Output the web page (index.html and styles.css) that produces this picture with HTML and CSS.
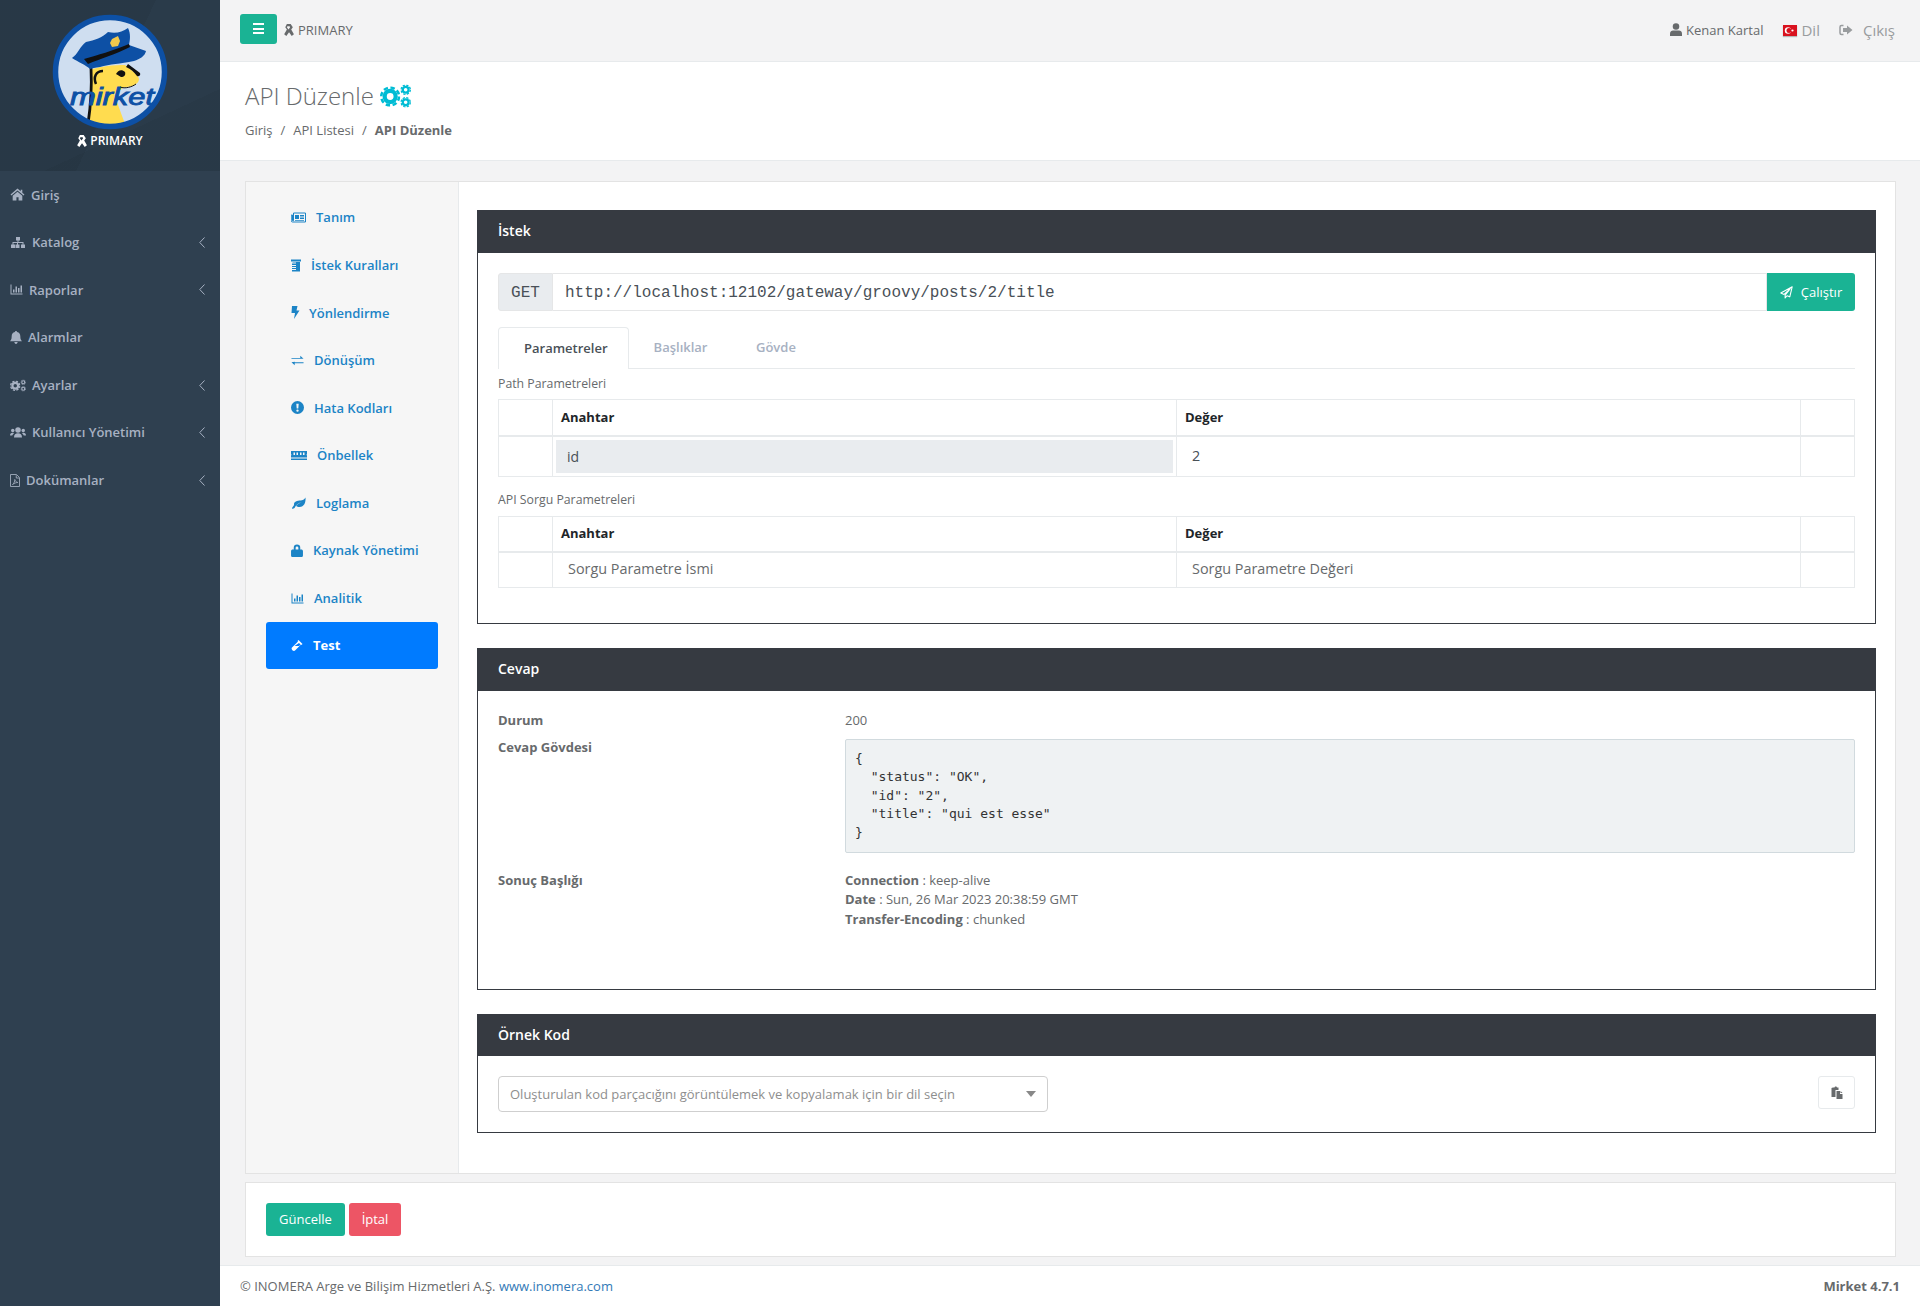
FILE: index.html
```html
<!DOCTYPE html>
<html lang="tr">
<head>
<meta charset="utf-8">
<title>API Düzenle</title>
<link rel="stylesheet" href="styles.css">
</head>
<body>
<svg class="defs" width="0" height="0" aria-hidden="true">
  <symbol id="i-ribbon" viewBox="0 0 24 24"><path d="M9 1h7l4 6-3 4 5 9-4 3-5-7-5 7-4-3 5-9-3-4zM10 5l-1 2 3 4 3-4-1-2z" fill-rule="evenodd" fill="currentColor"/></symbol>
  <symbol id="i-home" viewBox="0 0 28 24"><path d="M14 1 1 12l1.600 2L14 4.500 25.400 14 27 12l-4-3.400V3h-3v3zM5 14.500V23h7v-6h4v6h7v-8.500L14 7z" fill="currentColor"/></symbol>
  <symbol id="i-sitemap" viewBox="0 0 32 24"><path d="M12 1h8v7h-3v3h10v5h3v7h-8v-7h3v-3h-9v3h3v7h-8v-7h3v-3H7v3h3v7H2v-7h3v-5h10V8h-3z" fill="currentColor"/></symbol>
  <symbol id="i-chart" viewBox="0 0 26 22"><path d="M1 1h2v18h22v2H1zM6 11h3v6H6zM11 5h3v12h-3zM16 8h3v9h-3zM21 3h3v14h-3z" fill="currentColor"/></symbol>
  <symbol id="i-bell" viewBox="0 0 22 24"><path d="M11 0c1 0 2 1 2 2 4 .8 6 4 6 8 0 5 1 6 3 9H0c2-3 3-4 3-9 0-4 2-7.200 6-8 0-1 1-2 2-2zM8 20.500h6c0 2-1.300 3.500-3 3.500s-3-1.500-3-3.500z" fill="currentColor"/></symbol>
  <symbol id="i-gear" viewBox="0 0 24 24"><circle cx="12" cy="12" r="6.500" fill="none" stroke="currentColor" stroke-width="5"/><circle cx="12" cy="12" r="10.500" fill="none" stroke="currentColor" stroke-width="3" stroke-dasharray="5.200 3.050"/></symbol>
  <symbol id="i-cogs" viewBox="0 0 32 24"><use href="#i-gear" x="0" y="2" width="21" height="21"/><use href="#i-gear" x="21" y="0" width="11" height="11"/><use href="#i-gear" x="21" y="13" width="11" height="11"/></symbol>
  <symbol id="i-users" viewBox="0 0 32 24"><circle cx="16" cy="7" r="5.500" fill="currentColor"/><circle cx="5.500" cy="8" r="3.500" fill="currentColor"/><circle cx="26.500" cy="8" r="3.500" fill="currentColor"/><path d="M8 22c0-6 3-8.500 8-8.500s8 2.500 8 8.500zM0 18c0-4 2-5.500 5-5.500 1 0 2 .3 3 1-2 1.500-3 3-3.500 4.500zM32 18c0-4-2-5.500-5-5.500-1 0-2 .3-3 1 2 1.500 3 3 3.500 4.500z" fill="currentColor"/></symbol>
  <symbol id="i-pdf" viewBox="0 0 20 26"><path d="M2 1h11l6 6v18H1V1zM12.500 2.500V8H18M5 21c3-2 5-7 4.500-10 1 3 2.500 5 6 6-3 0-6 1-10.500 4z" fill="none" stroke="currentColor" stroke-width="1.700"/></symbol>
  <symbol id="i-news" viewBox="0 0 30 20"><path d="M5 1h24v18H3c-1.500 0-2.500-1-2.500-2.500V5H3v11.500c0 .5 2 .5 2 0z" fill="none" stroke="currentColor" stroke-width="2"/><path d="M8 5h8v8H8zM18 5h8v3h-8zM18 10h8v3h-8zM8 15h18v1.500H8z" fill="currentColor"/></symbol>
  <symbol id="i-scroll" viewBox="0 0 20 26"><path d="M0 1h20v4H0zM3 6h15v19H2v-3h8v-2H2v-2h8v-2H2v-2h8v-2H2V9h8V7H3z" fill="currentColor"/></symbol>
  <symbol id="i-bolt" viewBox="0 0 18 26"><path d="M2 0h11l-2 9h6L6 26l2-12H1z" fill="currentColor"/></symbol>
  <symbol id="i-exchange" viewBox="0 0 28 20"><path d="M1 4.500h19V0l7 6H1zM27 14H8v-1.500L1 14l7 6v-4h19z" fill="currentColor"/></symbol>
  <symbol id="i-alert" viewBox="0 0 24 24"><path d="M12 0a12 12 0 1 1 0 24 12 12 0 0 1 0-24zM9.800 5l.7 9h3l.7-9zM12 15.500a2.200 2.200 0 1 0 0 4.400 2.200 2.200 0 0 0 0-4.400z" fill-rule="evenodd" fill="currentColor"/></symbol>
  <symbol id="i-memory" viewBox="0 0 32 20"><path d="M0 1h32v6c-1 .6-1 2.400 0 3v4H0v-4c1-.6 1-2.400 0-3zM5 4v5h3V4zM11 4v5h3V4zM18 4v5h3V4zM24 4v5h3V4zM0 16h32v3H0z" fill-rule="evenodd" fill="currentColor"/></symbol>
  <symbol id="i-leaf" viewBox="0 0 30 24"><path d="M29 0c1 10-3 19-12 19-3 0-5-1-7-2 3-4 7-6 12-8-6 1-12 5-15 12l-4 2-1-2c2-3 3-4 4-6C5 8 13 6 19 6c4 0 8-2 10-6z" fill="currentColor"/></symbol>
  <symbol id="i-lock" viewBox="0 0 22 24"><path d="M5 10V7a6 6 0 0 1 12 0v3h2c1.500 0 3 1 3 3v8c0 2-1.500 3-3 3H3c-1.500 0-3-1-3-3v-8c0-2 1.500-3 3-3zm3.500 0h5V7a2.500 2.500 0 0 0-5 0z" fill="currentColor"/></symbol>
  <symbol id="i-vial" viewBox="0 0 24 24"><path d="M15 1l8 8-2 2-1-1L8 22c-3 3-9-3-6-6L14 4l-1-1zM7 13h9l3-3-3-3z" fill="currentColor" fill-rule="evenodd"/></symbol>
  <symbol id="i-user" viewBox="0 0 24 26"><circle cx="12" cy="7" r="6.500" fill="currentColor"/><path d="M0 26v-5c0-4 3-6 6-6h12c3 0 6 2 6 6v5z" fill="currentColor"/></symbol>
  <symbol id="i-signout" viewBox="0 0 28 24"><path d="M9 3H5C3.500 3 2 4.500 2 6v12c0 1.500 1.500 3 3 3h4" fill="none" stroke="currentColor" stroke-width="3"/><path d="M16 3l11 9-11 9v-5H8V8h8z" fill="currentColor"/></symbol>
  <symbol id="i-plane" viewBox="0 0 24 24"><path d="M22.500 1.500 1.500 13l6 2.500L19 5 9.500 17v5l3.500-4 5 2z" fill="none" stroke="currentColor" stroke-width="2" stroke-linejoin="round"/></symbol>
  <symbol id="i-paste" viewBox="0 0 24 26"><path d="M4 3h3c0-3 5-3 5 0h3v5H9v14H1V4zM11 10h7v6h5v10H11zM19 10l4 4h-4z" fill="currentColor"/></symbol>
  <symbol id="i-chev" viewBox="0 0 6 11"><path d="M5.500.5 .8 5.500l4.700 5" fill="none" stroke="currentColor" stroke-width="1"/></symbol>
</svg>

<aside class="sidebar">
  <div class="brand">
    <svg class="logo" viewBox="0 0 120 120">
      <defs><clipPath id="logo-clip"><circle cx="60" cy="60" r="54"/></clipPath></defs>
      <circle cx="60" cy="60" r="54.500" fill="#cfdef0"/>
      <g clip-path="url(#logo-clip)">
        <path d="M40 58c1 20 0 35-2 54h37L64 82c6-2 6-6 12-7 8 0 13-4 13-8 0-3-8-10-14-14-10 0-25 1-35 5z" fill="#ffdc4f"/>
        <path d="M41 56c1 20 0 36-3 56" fill="none" stroke="#111" stroke-width="2.800"/>
        <path d="M46 72c-3-7 0-13 7-13" fill="none" stroke="#111" stroke-width="2.500"/>
        <path d="M66 62c2-4 6-5 9-2 1 3-1 5-4 5z" fill="#111"/>
        <path d="M78 52l12 9c1 2-1 4-3 3-3-4-6-7-11-9z" fill="#111"/>
        <path d="M70 75c5 2 12 0 16-3" fill="none" stroke="#111" stroke-width="1"/>
      </g>
      <path d="M22 46c6-4 8-12 14-16 9-2 16-4 22-10 8 2 14 0 20-4 3 6 2 12 1 17l17 6c-1 5-6 8-12 10-14 3-24 3-34 6-5 1-8 1-10 2-4-4-12-7-18-11z" fill="#0d50a5"/>
      <path d="M34 47c14-4 28-8 45-15l1 3c-14 7-30 12-42 17z" fill="#111"/>
      <path d="M62 27l6-3 2 5-2 5-6 1-2-4z" fill="#f2c94c"/>
      <text class="logo-word" x="20" y="93" textLength="84" lengthAdjust="spacingAndGlyphs">mirket</text>
      <circle cx="60" cy="60" r="54.500" fill="none" stroke="#0d50a5" stroke-width="5.500"/>
    </svg>
    <div class="brand-name"><svg class="ic ic-ribbon"><use href="#i-ribbon"/></svg>PRIMARY</div>
  </div>
  <nav class="side-nav">
    <a class="side-item"><svg class="ic side-ic w15"><use href="#i-home"/></svg><span>Giriş</span></a>
    <a class="side-item"><svg class="ic side-ic w16"><use href="#i-sitemap"/></svg><span>Katalog</span><svg class="ic chev"><use href="#i-chev"/></svg></a>
    <a class="side-item"><svg class="ic side-ic w13"><use href="#i-chart"/></svg><span>Raporlar</span><svg class="ic chev"><use href="#i-chev"/></svg></a>
    <a class="side-item"><svg class="ic side-ic w12"><use href="#i-bell"/></svg><span>Alarmlar</span></a>
    <a class="side-item"><svg class="ic side-ic w16"><use href="#i-cogs"/></svg><span>Ayarlar</span><svg class="ic chev"><use href="#i-chev"/></svg></a>
    <a class="side-item"><svg class="ic side-ic w16"><use href="#i-users"/></svg><span>Kullanıcı Yönetimi</span><svg class="ic chev"><use href="#i-chev"/></svg></a>
    <a class="side-item"><svg class="ic side-ic w10"><use href="#i-pdf"/></svg><span>Dokümanlar</span><svg class="ic chev"><use href="#i-chev"/></svg></a>
  </nav>
</aside>

<div class="main">
  <header class="topbar">
    <button class="menu-btn"><span></span><span></span><span></span></button>
    <svg class="ic top-ribbon"><use href="#i-ribbon"/></svg>
    <span class="top-title">PRIMARY</span>
    <div class="top-right">
      <span class="top-user"><svg class="ic top-user-ic"><use href="#i-user"/></svg>Kenan Kartal</span>
      <span class="top-link top-lang">
        <svg class="flag" viewBox="0 0 14 11"><rect width="14" height="11" fill="#d9111e"/><circle cx="5" cy="5.500" r="3.200" fill="#fff"/><circle cx="6" cy="5.500" r="2.500" fill="#d9111e"/><circle cx="9.500" cy="5.500" r="1.100" fill="#fff"/></svg>Dil</span>
      <span class="top-link top-exit"><svg class="ic top-exit-ic"><use href="#i-signout"/></svg>Çıkış</span>
    </div>
  </header>

  <section class="heading">
    <h1>API Düzenle <svg class="ic title-ic"><use href="#i-cogs"/></svg></h1>
    <ol class="crumbs">
      <li>Giriş</li><li class="sep">/</li><li>API Listesi</li><li class="sep">/</li><li class="cur">API Düzenle</li>
    </ol>
  </section>

  <div class="wrapper">
    <div class="panel">
      <nav class="tab-nav">
        <a class="tab-item"><svg class="ic nav-ic w15b"><use href="#i-news"/></svg>Tanım</a>
        <a class="tab-item"><svg class="ic nav-ic w10b"><use href="#i-scroll"/></svg>İstek Kuralları</a>
        <a class="tab-item"><svg class="ic nav-ic w8b"><use href="#i-bolt"/></svg>Yönlendirme</a>
        <a class="tab-item"><svg class="ic nav-ic w13b"><use href="#i-exchange"/></svg>Dönüşüm</a>
        <a class="tab-item"><svg class="ic nav-ic w13b"><use href="#i-alert"/></svg>Hata Kodları</a>
        <a class="tab-item"><svg class="ic nav-ic w16b"><use href="#i-memory"/></svg>Önbellek</a>
        <a class="tab-item"><svg class="ic nav-ic w15b"><use href="#i-leaf"/></svg>Loglama</a>
        <a class="tab-item"><svg class="ic nav-ic w12b"><use href="#i-lock"/></svg>Kaynak Yönetimi</a>
        <a class="tab-item"><svg class="ic nav-ic w13b"><use href="#i-chart"/></svg>Analitik</a>
        <a class="tab-item active"><svg class="ic nav-ic w12b"><use href="#i-vial"/></svg>Test</a>
      </nav>
      <div class="tab-body">
        <section class="card card-req">
          <h2 class="card-head">İstek</h2>
          <div class="card-body">
            <div class="url-group">
              <span class="url-method">GET</span>
              <span class="url-value">http://localhost:12102/gateway/groovy/posts/2/title</span>
              <button class="btn btn-run"><svg class="ic run-ic"><use href="#i-plane"/></svg>Çalıştır</button>
            </div>
            <div class="tabs">
              <span class="tab tab-active">Parametreler</span>
              <span class="tab">Başlıklar</span>
              <span class="tab">Gövde</span>
            </div>
            <p class="tbl-title tbl-title-first">Path Parametreleri</p>
            <table class="ptable">
              <thead><tr><th class="c-side"></th><th>Anahtar</th><th>Değer</th><th class="c-side"></th></tr></thead>
              <tbody><tr class="row-filled"><td></td><td class="cell-ro"><span class="ro-field">id</span></td><td class="cell-val">2</td><td></td></tr></tbody>
            </table>
            <p class="tbl-title">API Sorgu Parametreleri</p>
            <table class="ptable">
              <thead><tr><th class="c-side"></th><th>Anahtar</th><th>Değer</th><th class="c-side"></th></tr></thead>
              <tbody><tr class="row-empty"><td></td><td class="cell-val ph">Sorgu Parametre İsmi</td><td class="cell-val ph">Sorgu Parametre Değeri</td><td></td></tr></tbody>
            </table>
          </div>
        </section>

        <section class="card card-res">
          <h2 class="card-head">Cevap</h2>
          <div class="card-body">
            <div class="res-row"><strong>Durum</strong><div>200</div></div>
            <div class="res-row"><strong>Cevap Gövdesi</strong><pre class="json">{
  "status": "OK",
  "id": "2",
  "title": "qui est esse"
}</pre></div>
            <div class="res-row res-headers"><strong>Sonuç Başlığı</strong><div>
              <div><b>Connection</b> : keep-alive</div>
              <div><b>Date</b> : Sun, 26 Mar 2023 20:38:59 GMT</div>
              <div><b>Transfer-Encoding</b> : chunked</div>
            </div></div>
          </div>
        </section>

        <section class="card card-code">
          <h2 class="card-head">Örnek Kod</h2>
          <div class="card-body code-body">
            <div class="select"><span>Oluşturulan kod parçacığını görüntülemek ve kopyalamak için bir dil seçin</span><i class="caret"></i></div>
            <button class="copy-btn"><svg class="ic copy-ic"><use href="#i-paste"/></svg></button>
          </div>
        </section>
      </div>
    </div>
    <div class="actions">
      <button class="btn btn-save">Güncelle</button>
      <button class="btn btn-cancel">İptal</button>
    </div>
  </div>

  <footer class="footer">
    <div>© INOMERA Arge ve Bilişim Hizmetleri A.Ş. <a class="foot-link">www.inomera.com</a></div>
    <strong>Mirket 4.7.1</strong>
  </footer>
</div>
</body>
</html>
```
FILE: styles.css
```css
* { box-sizing: border-box; }
html, body { margin: 0; padding: 0; }
body {
  display: flex;
  width: 1920px;
  height: 1306px;
  overflow: hidden;
  background: #f3f3f4;
  color: #676a6c;
  font-family: "Open Sans", "Liberation Sans", sans-serif;
  font-size: 13px;
  line-height: 1.42857;
}
.defs { position: absolute; }
.ic { display: block; flex: none; color: inherit; }
button { font: inherit; cursor: pointer; }

/* Sidebar */
.sidebar { flex: 0 0 220px; background: #2f4050; }
.brand {
  height: 171px;
  padding-top: 12px;
  background:
    linear-gradient(115deg, rgba(0,0,0,.05) 0 52%, transparent 52%),
    linear-gradient(155deg, transparent 0 70%, rgba(0,0,0,.04) 70%),
    #2a3b4a;
  color: #fff;
}
.logo { display: block; width: 120px; height: 120px; margin: 0 auto; }
.logo-word {
  font-family: "Liberation Sans", sans-serif;
  font-style: italic;
  font-size: 24px;
  fill: #0d50a5;
  stroke: #0d50a5;
  stroke-width: .9px;
}
.brand-name {
  display: flex;
  justify-content: center;
  align-items: center;
  gap: 2px;
  font-size: 12px;
  font-weight: 600;
  line-height: 17px;
}
.ic-ribbon { width: 13px; height: 14px; margin-left: -2px; }
.side-nav { display: flex; flex-direction: column; }
.side-item {
  display: flex;
  align-items: center;
  gap: 6px;
  height: 47.600px;
  padding: 0 15px 0 10px;
  color: #a7b1c2;
  font-weight: 600;
}
.side-ic { height: 13px; }
.w15 { width: 15px; }
.w16 { width: 16px; }
.w13 { width: 13px; }
.w12 { width: 12px; }
.w10 { width: 10px; }
.chev { width: 6px; height: 11px; margin-left: auto; }

/* Main */
.main { flex: 1; min-width: 0; display: flex; flex-direction: column; }
.topbar {
  display: flex;
  align-items: center;
  height: 62px;
  padding: 0 25px 1px 20px;
  border-bottom: 1px solid #e7eaec;
  background: #f3f3f4;
}
.menu-btn {
  display: flex;
  flex-direction: column;
  justify-content: center;
  gap: 2.500px;
  align-items: center;
  width: 37px;
  height: 30px;
  margin-top: -3px;
  padding: 0;
  border: 0;
  border-radius: 3px;
  background: #1ab394;
}
.menu-btn span { display: block; width: 11px; height: 2px; background: #fff; }
.top-ribbon { width: 13px; height: 14px; margin-left: 5px; margin-right: 3px; color: #676a6c; }
.top-title { color: #676a6c; }
.top-right { display: flex; align-items: center; margin-left: auto; }
.top-user { display: flex; align-items: center; gap: 4px; }
.top-user-ic { width: 12px; height: 13px; }
.top-link { display: flex; align-items: center; padding-top: 1px; color: #999c9e; font-size: 15px; }
.flag { width: 14px; height: 11px; margin-right: 4px; box-shadow: 0 1px 1px rgba(0,0,0,.25); }
.top-lang { margin-left: 20px; }
.top-exit { margin-left: 19px; }
.top-exit-ic { width: 14px; height: 12px; margin-right: 10px; }

.heading {
  height: 99px;
  padding: 17px 0 0 25px;
  border-bottom: 1px solid #e7eaec;
  background: #fff;
}
.heading h1 {
  display: flex;
  align-items: center;
  gap: 6px;
  margin: 0;
  font-size: 24px;
  font-weight: 300;
  line-height: 33px;
}
.title-ic { width: 31px; height: 24px; color: #00bcd4; }
.crumbs { display: flex; gap: 8px; margin: 9px 0 0; padding: 0; list-style: none; line-height: 18px; }
.cur { font-weight: 700; }

.wrapper { flex: 1; padding: 20px 24px 8px 25px; }
.panel {
  display: flex;
  height: 993px;
  border: 1px solid #e3e3e3;
  background: #fff;
}
.tab-nav {
  flex: 0 0 213px;
  display: flex;
  flex-direction: column;
  padding: 12px 20px 0 20px;
  border-right: 1px solid #e7eaec;
  background: #f6f6f6;
}
.tab-item {
  display: flex;
  align-items: center;
  gap: 10px;
  flex: 0 0 47.560px;
  padding-left: 25px;
  border-radius: 3px;
  color: #1c84c6;
  font-weight: 600;
}
.tab-item.active { background: #007bff; color: #fff; font-weight: 700; }
.nav-ic { height: 13px; }
.w15b { width: 15px; }
.w10b { width: 10px; }
.w8b { width: 9px; margin-right: -1px; }
.w13b { width: 13px; }
.w16b { width: 16px; }
.w12b { width: 12px; }

.tab-body { flex: 1; min-width: 0; padding: 28px 18px 0 18px; }
.card { width: 1399px; margin-bottom: 24px; }
.card-head {
  margin: 0;
  height: 43px;
  padding: 0 21px;
  background: #363a41;
  color: #fff;
  font-size: 14px;
  font-weight: 600;
  line-height: 42px;
}
.card-body { padding: 20px; border: 1px solid #363a41; border-top: 0; }
.card-req .card-body { height: 371px; }
.card-res .card-body { height: 299px; }
.card-code .card-head { height: 42px; }

.url-group { display: flex; height: 38px; }
.url-method, .url-value {
  padding-top: 1px;
  font-family: "Liberation Mono", monospace;
  font-size: 16px;
  line-height: 37px;
  color: #495057;
}
.url-method {
  flex: 0 0 55px;
  border: 1px solid #e5e6e7;
  border-radius: 3px 0 0 3px;
  background: #e9ecef;
  text-align: center;
}
.url-value {
  flex: 1;
  padding-left: 12px;
  border: 1px solid #e5e6e7;
  border-left: 0;
}
.btn { border: 0; border-radius: 3px; color: #fff; }
.btn-run {
  display: flex;
  align-items: center;
  justify-content: center;
  gap: 8px;
  flex: 0 0 88px;
  border-radius: 0 3px 3px 0;
  background: #1ab394;
}
.run-ic { width: 13px; height: 13px; }

.tabs { display: flex; height: 42px; margin-top: 16px; border-bottom: 1px solid #e7eaec; }
.tab {
  padding: 0 23.500px 0 25px;
  color: #a7b1c2;
  font-weight: 600;
  line-height: 41px;
}
.tab-active {
  height: 42px;
  padding: 0 20px 0 25px;
  border: 1px solid #e7eaec;
  border-bottom: 0;
  border-radius: 4px 4px 0 0;
  background: #fff;
  color: #495057;
}
.tbl-title { margin: 0; font-size: 12.300px; line-height: 17px; }
.tbl-title-first { height: 30px; padding-top: 6px; }
.tbl-title:not(.tbl-title-first) { height: 39px; padding-top: 14px; }
.ptable { width: 100%; border-collapse: collapse; table-layout: fixed; color: #212529; }
.ptable th, .ptable td { padding: 0; border: 1px solid #e7eaec; }
.ptable th { height: 36px; padding-left: 8px; font-weight: 700; text-align: left; }
.ptable th.c-side { width: 54px; padding: 0; }
.ptable thead tr { border-bottom: 2px solid #e7eaec; }
.row-filled td { height: 40px; }
.row-empty td { height: 35px; }
.cell-ro { padding: 3px !important; }
.ro-field {
  display: block;
  height: 33px;
  padding-left: 11px;
  background: #e9ecef;
  font-size: 14px;
  line-height: 33px;
  color: #495057;
}
.cell-val { padding-left: 15px !important; font-size: 14.400px; color: #495057; }
.ph { color: #676a6c; }

.res-row { display: grid; grid-template-columns: 347px 1fr; line-height: 18.600px; }
.res-row + .res-row { margin-top: 8px; }
.json {
  margin: 1px 0 0;
  height: 114px;
  padding: 10px 9px 0;
  border: 1px solid #d1dade;
  border-radius: 2px;
  background: #eff2f3;
  color: #333;
  font-family: "DejaVu Sans Mono", monospace;
  font-size: 13px;
  line-height: 18.570px;
}
.res-headers { margin-top: 18px !important; line-height: 19.500px; }
.code-body { display: flex; align-items: flex-start; justify-content: space-between; height: 77px; }
.select {
  display: flex;
  align-items: center;
  justify-content: space-between;
  width: 550px;
  height: 36px;
  padding: 0 11px;
  border: 1px solid #cfcfcf;
  border-radius: 4px;
  color: #8e8e8e;
}
.caret { border: 5px solid transparent; border-top: 6px solid #888; border-bottom: 0; }
.copy-btn {
  display: flex;
  align-items: center;
  justify-content: center;
  width: 37px;
  height: 33px;
  padding: 0;
  border: 1px solid #e7eaec;
  border-radius: 3px;
  background: #fff;
}
.copy-ic { width: 12px; height: 13px; color: #676a6c; }

.actions {
  display: flex;
  gap: 4px;
  height: 75px;
  margin-top: 8px;
  padding: 20px;
  border: 1px solid #e3e3e3;
  background: #fff;
}
.btn-save { width: 79px; height: 33px; background: #1ab394; }
.btn-cancel { width: 52px; height: 33px; background: #ed5565; }

.footer {
  display: flex;
  justify-content: space-between;
  align-items: center;
  height: 41px;
  padding: 0 20px;
  border-top: 1px solid #e7eaec;
  background: #fff;
}
.foot-link { color: #337ab7; }
```
